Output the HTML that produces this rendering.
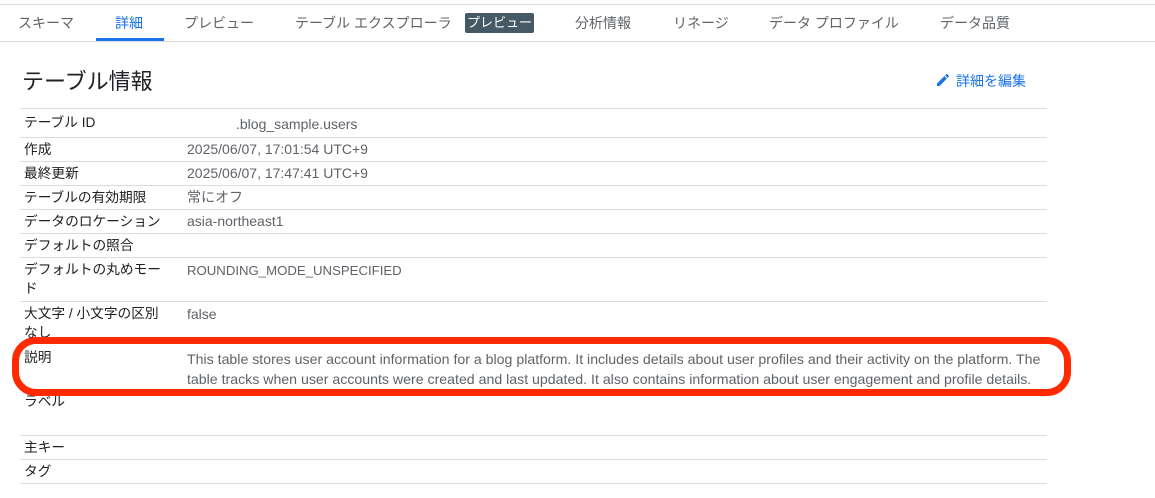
<!DOCTYPE html>
<html><head><meta charset="utf-8"><style>
body{margin:0;width:1155px;height:498px;background:#fff;position:relative;overflow:hidden;font-family:"Liberation Sans","Noto Sans CJK JP",sans-serif;}
.a{position:absolute;white-space:nowrap;}
.tab{position:absolute;top:13px;font-size:14px;color:#5f6368;}
.hl{position:absolute;left:20px;width:1027px;height:1px;background:#dadce0;}
.l{position:absolute;left:24px;font-size:13.7px;color:#202124;line-height:19px;}
.v{position:absolute;left:187px;font-size:14px;color:#5f6368;line-height:19px;}
</style></head><body>
<div class="a" style="left:0;top:4px;width:1155px;height:1px;background:#dadce0"></div>
<div class="a" style="left:0;top:41px;width:1155px;height:1px;background:#dadce0"></div>
<div class="tab" style="left:18px">スキーマ</div>
<div class="tab" style="left:115px;color:#1a73e8">詳細</div>
<div class="a" style="left:96px;top:38px;width:68px;height:3px;background:#1a73e8"></div>
<div class="tab" style="left:184px">プレビュー</div>
<div class="tab" style="left:295px">テーブル エクスプローラ</div>
<div class="a" style="left:465px;top:13px;width:69px;height:20px;background:#455a64;border-radius:2px;color:#fff;font-size:13px;line-height:20px;text-align:center">プレビュー</div>
<div class="tab" style="left:575px">分析情報</div>
<div class="tab" style="left:673px">リネージ</div>
<div class="tab" style="left:769px">データ プロファイル</div>
<div class="tab" style="left:940px">データ品質</div>
<div class="a" style="left:22px;top:64px;font-size:22px;color:#202124">テーブル情報</div>
<svg class="a" style="left:935px;top:72px" width="16" height="16" viewBox="0 0 24 24"><path fill="#1a73e8" d="M3 17.25V21h3.75L17.81 9.94l-3.75-3.75L3 17.25zM20.71 7.04a1 1 0 0 0 0-1.41l-2.34-2.340a1 1 0 0 0-1.41 0l-1.83 1.83 3.75 3.75 1.83-1.83z"/></svg>
<div class="a" style="left:956px;top:71px;font-size:14px;color:#1a73e8">詳細を編集</div>
<div class="hl" style="top:108px"></div>
<div class="hl" style="top:137px"></div>
<div class="hl" style="top:161px"></div>
<div class="hl" style="top:185px"></div>
<div class="hl" style="top:209px"></div>
<div class="hl" style="top:233px"></div>
<div class="hl" style="top:257px"></div>
<div class="hl" style="top:301px"></div>
<div class="hl" style="top:435px"></div>
<div class="hl" style="top:459px"></div>
<div class="hl" style="top:483px"></div>
<div class="l" style="top:113px">テーブル ID</div><div class="v" style="left:236px;top:115px">.blog_sample.users</div>
<div class="l" style="top:140px">作成</div><div class="v" style="top:140px">2025/06/07, 17:01:54 UTC+9</div>
<div class="l" style="top:164px">最終更新</div><div class="v" style="top:164px">2025/06/07, 17:47:41 UTC+9</div>
<div class="l" style="top:188px">テーブルの有効期限</div><div class="v" style="top:188px">常にオフ</div>
<div class="l" style="top:212px">データのロケーション</div><div class="v" style="top:212px">asia-northeast1</div>
<div class="l" style="top:236px">デフォルトの照合</div>
<div class="l" style="top:260px">デフォルトの丸めモー<br>ド</div><div class="v" style="top:261px;font-size:13.2px">ROUNDING_MODE_UNSPECIFIED</div>
<div class="l" style="top:304px">大文字 / 小文字の区別<br>なし</div><div class="v" style="top:305px">false</div>
<div class="l" style="top:348px">説明</div>
<div class="v" style="top:349px;line-height:20px;font-size:14.15px">This table stores user account information for a blog platform. It includes details about user profiles and their activity on the platform. The<br>table tracks when user accounts were created and last updated. It also contains information about user engagement and profile details.</div>
<div class="l" style="top:392px">ラベル</div>
<div class="l" style="top:438px">主キー</div>
<div class="l" style="top:462px">タグ</div>
<div class="a" style="left:12px;top:337px;width:1045px;height:45px;border:7px solid #ff2a00;border-radius:24px"></div>
</body></html>
